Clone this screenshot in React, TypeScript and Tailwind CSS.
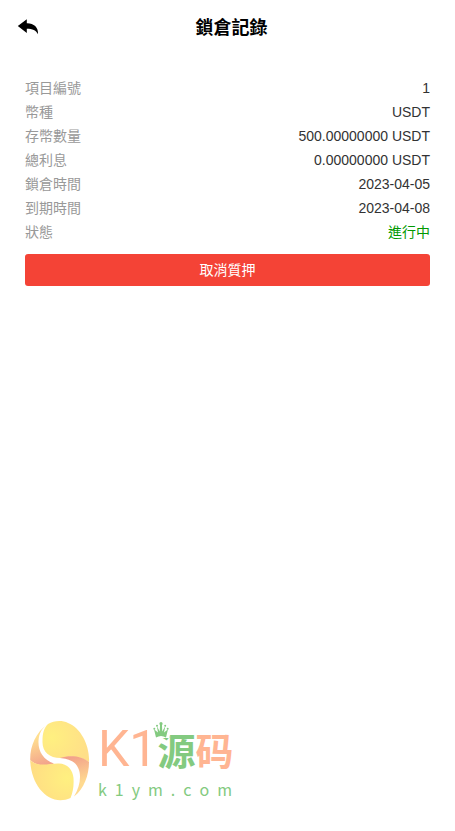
const rows = [
  { label: "項目編號", value: "1" },
  { label: "幣種", value: "USDT" },
  { label: "存幣數量", value: "500.00000000 USDT" },
  { label: "總利息", value: "0.00000000 USDT" },
  { label: "鎖倉時間", value: "2023-04-05" },
  { label: "到期時間", value: "2023-04-08" },
  { label: "狀態", value: "進行中", active: true },
];

function BackIcon() {
  return (
    <svg viewBox="0 0 22 16" className="h-4 w-[22px]" fill="#000" aria-hidden="true">
      <path d="M0.8 7 9.8 0.2V4.2C16.5 4 21.5 8 21 15.2 19.2 11.6 15.5 9.8 9.8 9.8V14Z" />
    </svg>
  );
}

function EggLogo() {
  return (
    <svg viewBox="0 0 60 80" className="h-20 w-[60px]" aria-hidden="true">
      <defs>
        <radialGradient id="eggTop" cx="0.2" cy="0.4" r="0.8">
          <stop offset="0" stopColor="#fff080" />
          <stop offset="1" stopColor="#ffdf88" />
        </radialGradient>
        <radialGradient id="eggBottom" cx="0.85" cy="0.45" r="0.9">
          <stop offset="0" stopColor="#fff080" />
          <stop offset="1" stopColor="#ffdc84" />
        </radialGradient>
        <linearGradient id="foldLeft" x1="0.3" y1="0" x2="0.5" y2="1">
          <stop offset="0.3" stopColor="#ffdf90" />
          <stop offset="1" stopColor="#f3a48c" />
        </linearGradient>
        <linearGradient id="foldRight" x1="0.4" y1="0" x2="0.6" y2="1">
          <stop offset="0" stopColor="#f2a08a" />
          <stop offset="0.7" stopColor="#ffda90" />
        </linearGradient>
      </defs>
      <path fill="url(#eggTop)" d="M18 3C24-.5 32-1 38 2 51 7 60 25 59 41 50 35 40 35 33 37 20 38 12 31 12.5 20 12.5 12 14 7 18 3Z" />
      <path fill="url(#foldRight)" d="M30 37C40 33.5 52 35 59 41 59 54 54 68 44 75.5 52 62 52 48 44 41.5 39 38 35 37.5 30 37Z" />
      <path fill="url(#foldLeft)" d="M17.5 3.5C6 11 0 25 .2 39 7 46 17 45 24 42.5 13 39 8 30 8.5 20 9 12 12 7 17.5 3.5Z" />
      <path fill="url(#eggBottom)" d="M.2 39C7 46 17 43 28 42.5 37 42 43 49 43.5 57 44 65 43 71 40.5 77 20 86 1 66 .2 39Z" />
    </svg>
  );
}

function Crown() {
  return (
    <svg viewBox="0 0 16 16" className="absolute -left-1 -top-2 h-4 w-4 bg-white" fill="#83ca80" aria-hidden="true">
      <path d="M3 15.5 1 7.2 5 10.5 3.8 4 6.8 9.5 7 3H9L9.2 9.5 12.4 4 11 10.5 15 7.2 13 15.5Q8 12.5 3 15.5Z" />
      <circle cx="1.3" cy="6.8" r="1" />
      <circle cx="4" cy="3.7" r="1" />
      <circle cx="8" cy="1.7" r="1.6" />
      <circle cx="12.2" cy="3.7" r="1" />
      <circle cx="14.7" cy="6.8" r="1" />
    </svg>
  );
}

export default function App() {
  return (
    <div className="flex min-h-screen flex-col bg-white font-['Liberation_Sans','Noto_Sans_CJK_TC',sans-serif] text-sm text-[#323233]">
      <header className="flex h-14 items-center pl-[17px] pr-[31px]">
        <button type="button" aria-label="返回" className="pb-0.5">
          <BackIcon />
        </button>
        <h1 className="flex-1 text-center text-lg font-bold text-black">鎖倉記錄</h1>
      </header>

      <main className="px-[25px] pt-5">
        <dl>
          {rows.map((row) => (
            <div key={row.label} className="flex h-6 items-center justify-between">
              <dt className="text-[#999999]">{row.label}</dt>
              <dd className={row.active ? "text-[#009900]" : ""}>{row.value}</dd>
            </div>
          ))}
        </dl>
        <button type="button" className="mt-[10px] h-8 w-full rounded-[3px] bg-[#f44336] text-white">
          取消質押
        </button>
      </main>

      <footer className="mt-auto flex items-center gap-2 pb-[30px] pl-[30px]">
        <EggLogo />
        <div className="flex w-[134px] flex-col">
          <div className="flex h-14 items-center leading-none text-[#ffb592]">
            <span className="font-['Roboto',sans-serif] text-[50px]">K1</span>
            <span className="relative font-['Noto_Sans_CJK_SC',sans-serif] text-[38px] font-bold text-[#83ca80]">
              源
              <Crown />
            </span>
            <span className="font-['Noto_Sans_CJK_SC',sans-serif] text-[38px] font-bold">码</span>
          </div>
          <div className="flex h-6 items-center justify-between font-['Noto_Sans_CJK_SC',sans-serif] text-base leading-6 text-[#83ca80]">
            {Array.from("k1ym.com").map((letter, index) => (
              <span key={index}>{letter}</span>
            ))}
          </div>
        </div>
      </footer>
    </div>
  );
}
